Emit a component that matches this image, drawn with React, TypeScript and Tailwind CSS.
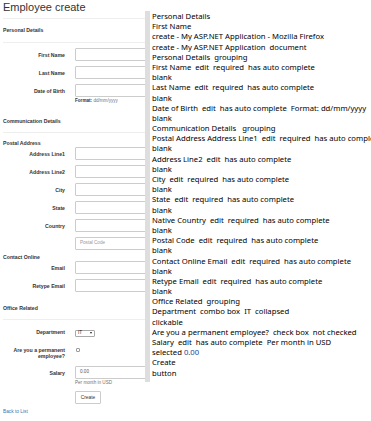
import type { ReactNode } from 'react';

const lines: ReactNode[] = [
  'Personal Details',
  'First Name',
  'create - My ASP.NET Application - Mozilla Firefox',
  'create - My ASP.NET Application  document',
  'Personal Details  grouping',
  'First Name  edit  required  has auto complete',
  'blank',
  'Last Name  edit  required  has auto complete',
  'blank',
  'Date of Birth  edit  has auto complete  Format: dd/mm/yyyy',
  'blank',
  'Communication Details   grouping',
  'Postal Address Address Line1  edit  required  has auto complete',
  'blank',
  'Address Line2  edit  has auto complete',
  'blank',
  'City  edit  required  has auto complete',
  'blank',
  'State  edit  required  has auto complete',
  'blank',
  'Native Country  edit  required  has auto complete',
  'blank',
  'Postal Code  edit  required  has auto complete',
  'blank',
  'Contact Online Email  edit  required  has auto complete',
  'blank',
  'Retype Email  edit  required  has auto complete',
  'blank',
  'Office Related  grouping',
  'Department  combo box  IT  collapsed',
  'clickable',
  'Are you a permanent employee?  check box  not checked',
  'Salary  edit  has auto complete  Per month in USD',
  <>
    selected <span className="text-[#1c3f94]">0.00</span>
  </>,
  'Create',
  'button',
];

const Input = ({ placeholder, value }: { placeholder?: string; value?: string }) => (
  <div className="h-[13px] w-[104px] rounded-[1px] border border-[#cccccc] bg-white pl-[4px] flex items-center text-[4.6px] text-[#555]">
    {value}
    {placeholder && <span className="text-[#999]">{placeholder}</span>}
  </div>
);

const Row = ({ label, children }: { label?: string; children: ReactNode }) => (
  <div className="flex items-center h-[13px] mb-[5px]">
    <div className="w-[62px] text-right font-bold text-[5.2px] pt-[2px]">{label}</div>
    <div className="ml-[10px]">{children}</div>
  </div>
);

const Section = ({ children, className }: { children: ReactNode; className: string }) => (
  <div className={`h-[6px] leading-[6px] font-bold text-[5.2px] ${className}`}>{children}</div>
);

export default function App() {
  return (
    <div className="relative w-[371px] h-[421px] bg-white overflow-hidden font-['Liberation_Sans',Arial,sans-serif] text-[#333]">
      <div className="px-[3px] pt-[1px]">
        <h2 className="text-[11px] leading-[13px] h-[13px]">Employee create</h2>
        <div className="mt-[4px] border-t border-[#eeeeee]" />
        <Section className="mt-[8px]">Personal Details</Section>
        <div className="mt-[9px] border-t border-[#eeeeee]" />

        <div className="mt-[5px]">
          <Row label="First Name"><Input /></Row>
          <Row label="Last Name"><Input /></Row>
          <div className="flex items-center h-[13px] mb-[1px]">
            <div className="w-[62px] text-right font-bold text-[5.2px] pt-[2px]">Date of Birth</div>
            <div className="ml-[10px]"><Input /></div>
          </div>
          <div className="ml-[72px] h-[6px] leading-[6px] text-[4.6px] text-[#737373]">
            <span className="font-bold text-[#333]">Format:</span> dd/mm/yyyy
          </div>
        </div>

        <Section className="mt-[14px]">Communication Details</Section>
        <div className="mt-[8px] border-t border-[#eeeeee]" />
        <Section className="mt-[7px]">Postal Address</Section>

        <div className="mt-[1px]">
          <Row label="Address Line1"><Input /></Row>
          <Row label="Address Line2"><Input /></Row>
          <Row label="City"><Input /></Row>
          <Row label="State"><Input /></Row>
          <Row label="Country"><Input /></Row>
          <Row><Input placeholder="Postal Code" /></Row>
        </div>

        <Section className="mt-[-1px]">Contact Online</Section>
        <div className="mt-[1px]">
          <Row label="Email"><Input /></Row>
          <Row label="Retype Email"><Input /></Row>
        </div>

        <Section className="mt-[13px]">Office Related</Section>
        <div className="mt-[8px] border-t border-[#eeeeee]" />

        <div className="mt-[9px] flex items-center h-[8px]">
          <div className="w-[62px] text-right font-bold text-[5.2px]">Department</div>
          <div className="ml-[10px] h-[7px] w-[20px] border border-[#a9a9a9] rounded-[1px] bg-white flex items-center justify-between px-[2px] text-[4.6px] text-[#222]">
            <span>IT</span>
            <span className="w-0 h-0 border-l-[1.5px] border-r-[1.5px] border-t-[2px] border-l-transparent border-r-transparent border-t-[#222]" />
          </div>
        </div>

        <div className="mt-[10px] flex items-start h-[12px]">
          <div className="w-[62px] text-right font-bold text-[5.2px] leading-[6px]">
            Are you a permanent
            <br />
            employee?
          </div>
          <div className="ml-[11px] mt-[1px] w-[4px] h-[4px] border border-[#9a9a9a] rounded-[1px] bg-white" />
        </div>

        <div className="mt-[7px]">
          <div className="flex items-center h-[13px]">
            <div className="w-[62px] text-right font-bold text-[5.2px] pt-[2px]">Salary</div>
            <div className="ml-[10px]"><Input value="0.00" /></div>
          </div>
          <div className="ml-[72px] mt-[1px] h-[6px] leading-[6px] text-[4.6px] text-[#737373]">Per month in USD</div>
        </div>

        <div className="mt-[5px] ml-[72px] h-[13px] w-[26px] border border-[#cccccc] rounded-[1px] bg-white flex items-center justify-center text-[4.8px] text-[#333]">
          Create
        </div>

        <div className="mt-[5px] h-[6px] leading-[6px] text-[4.8px] text-[#337ab7]">Back to List</div>
      </div>

      <div className="absolute left-[145px] top-[11px] w-[226px] border-l-[5px] border-[#dedede] bg-white pb-[4px] overflow-hidden">
        <div className="pl-[2px] text-[7.7px] leading-[10.2px] text-black whitespace-pre font-['Noto_Sans',sans-serif]">
          {lines.map((l, i) => (
            <div key={i} className="h-[10.2px]">{l}</div>
          ))}
        </div>
      </div>
    </div>
  );
}
